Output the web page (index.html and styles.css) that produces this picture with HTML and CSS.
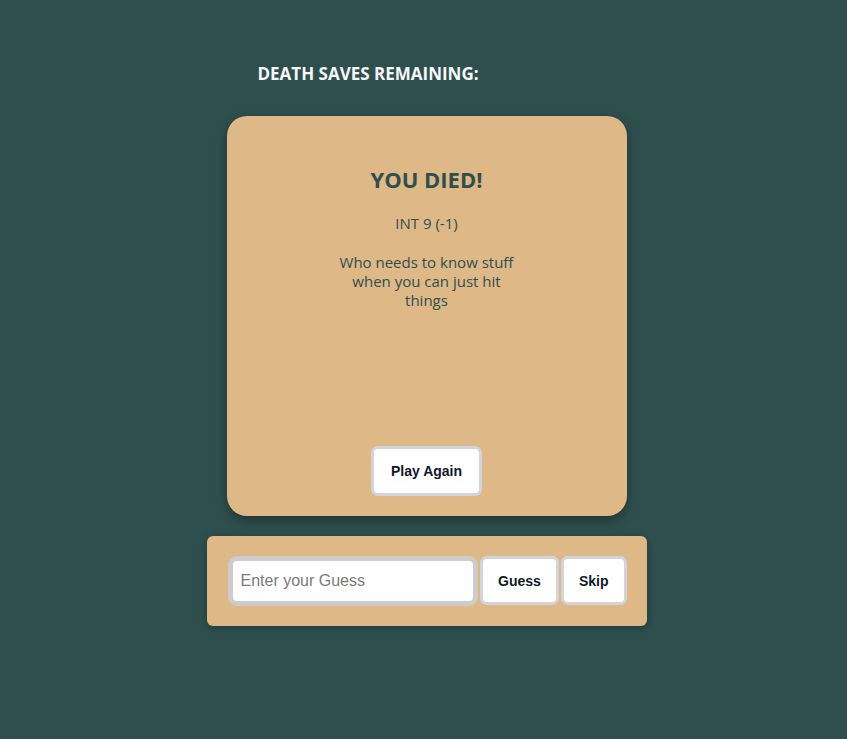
FILE: index.html
```html
<!DOCTYPE html>
<html>
<head>
<meta charset="utf-8">
<link rel="stylesheet" href="styles.css">
</head>
<body>
<main class="app">
  <header class="saves">
    <h2 class="saves-title">DEATH SAVES REMAINING:</h2>
  </header>
  <section class="card">
    <div class="card-body">
      <h1 class="card-title">YOU DIED!</h1>
      <p class="card-stat">INT 9 (-1)</p>
      <p class="card-text">Who needs to know stuff when you can just hit things</p>
    </div>
    <button class="btn">Play Again</button>
  </section>
  <form class="guess-bar" onsubmit="return false">
    <input class="guess-input" type="text" placeholder="Enter your Guess">
    <button class="btn btn-guess" type="button">Guess</button>
    <button class="btn btn-skip" type="button">Skip</button>
  </form>
</main>
</body>
</html>
```
FILE: styles.css
```css
* { box-sizing: border-box; }
html, body {
  margin: 0;
  padding: 0;
  background: #2f4f4f;
  height: 100%;
}
body {
  font-family: "Open Sans", "DejaVu Sans", sans-serif;
}
.app {
  display: flex;
  flex-direction: column;
  align-items: center;
  padding-top: 61px;
  padding-left: 6px;
}
.saves {
  width: 400px;
  padding-left: 31px;
  height: 55px;
}
.saves-title {
  margin: 0;
  color: #f4f8f8;
  font-size: 17px;
  font-weight: 700;
  line-height: 26px;
}
.card {
  width: 400px;
  height: 400px;
  background: #deb887;
  border-radius: 20px;
  box-shadow: 0 4px 12px rgba(0,0,0,0.35);
  display: flex;
  flex-direction: column;
  align-items: center;
  justify-content: space-between;
  padding: 48px 20px 20px;
  color: #2f4f4f;
  text-align: center;
}
.card-body {
  display: flex;
  flex-direction: column;
  align-items: center;
}
.card-title {
  margin: 0;
  font-size: 22px;
  line-height: 30px;
  font-weight: 700;
}
.card-stat {
  margin: 20px 0 0;
  font-size: 15px;
  line-height: 19px;
  font-weight: 500;
}
.card-text {
  margin: 20px 0 0;
  width: 190px;
  font-size: 15px;
  line-height: 19px;
  font-weight: 500;
}
.btn {
  background: #fff;
  border: 3px solid #d1d5db;
  border-radius: 7px;
  padding: 14px 17px;
  font-family: "Liberation Sans", Arial, sans-serif;
  font-weight: 700;
  font-size: 14px;
  line-height: 16px;
  color: #111827;
  height: 50px;
}
.guess-bar {
  margin: 20px 0 0;
  width: 440px;
  background: #deb887;
  border-radius: 6px;
  box-shadow: 0 2px 8px rgba(0,0,0,0.3);
  padding: 20px 20px 20px 21px;
  display: flex;
  gap: 2px;
}
.guess-bar .btn {
  height: 49px;
  flex: none;
  padding: 14px 15px;
}
.guess-input {
  flex: 1;
  min-width: 0;
  height: 50px;
  border: 5px solid #cccccc;
  border-radius: 9px;
  padding: 0 8px;
  font-family: "Liberation Sans", Arial, sans-serif;
  font-size: 16px;
  color: #333;
  background: #fff;
}
.guess-input::placeholder {
  color: #7a7a7a;
}
```
